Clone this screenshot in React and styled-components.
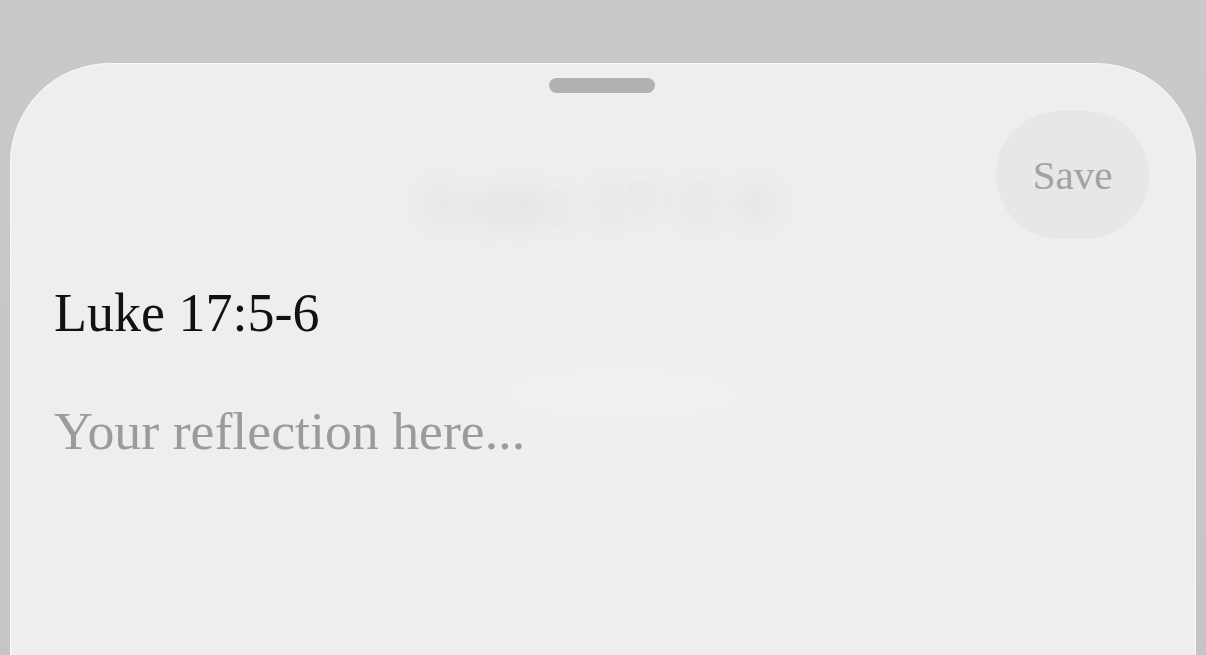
import React from "react";
import styled, { createGlobalStyle } from "styled-components";

const Global = createGlobalStyle`
  html, body { margin: 0; padding: 0; }
  body {
    background: #c7c7c7;
    font-family: "Liberation Serif", "DejaVu Serif", serif;
    overflow: hidden;
  }
`;

const Page = styled.div`
  height: 655px;
  padding: 63px 10px 0;
  box-sizing: border-box;
  background: linear-gradient(180deg, #c9c9c9 0%, #c5c5c5 100%);
`;

const Sheet = styled.div`
  position: relative;
  height: 100%;
  box-sizing: border-box;
  background: #eeeeee;
  border: 1.5px solid #f9f9f9;
  border-bottom: none;
  border-radius: 100px 100px 0 0;
  padding: 0 46px 0 43px;
  display: flex;
  flex-direction: column;
  overflow: hidden;
`;

const Glow = styled.div`
  position: absolute;
  left: 160px;
  top: 230px;
  width: 900px;
  height: 200px;
  border-radius: 50%;
  background: radial-gradient(ellipse at center, rgba(255,255,255,0.12) 0%, rgba(255,255,255,0) 70%);
  pointer-events: none;
`;

const GhostTitle = styled.div`
  position: absolute;
  left: 0;
  right: 0;
  top: 108px;
  text-align: center;
  font-size: 54px;
  font-weight: 700;
  letter-spacing: 6px;
  color: transparent;
  text-shadow: 0 0 40px rgba(0, 0, 0, 0.1), 0 0 24px rgba(0, 0, 0, 0.03);
  pointer-events: none;
  user-select: none;
`;

const Handle = styled.div`
  align-self: center;
  width: 106px;
  height: 15px;
  margin-top: 14px;
  border-radius: 8px;
  background: #b1b1b3;
  position: relative;
`;

const Header = styled.div`
  display: flex;
  justify-content: flex-end;
  margin-top: 18px;
  position: relative;
`;

const SaveButton = styled.button`
  width: 153px;
  height: 128px;
  border: none;
  border-radius: 64px;
  background: #e7e7e7;
  color: #a2a2a2;
  font-family: inherit;
  font-size: 41px;
  padding: 0;
  cursor: pointer;
`;

const Title = styled.h1`
  margin: 42px 0 0;
  font-size: 54px;
  line-height: 64px;
  font-weight: 400;
  color: #111111;
  position: relative;
`;

const Reflection = styled.div`
  margin-top: 54px;
  font-size: 53.8px;
  line-height: 64px;
  color: #9b9b9f;
  position: relative;
`;

export default function App() {
  return (
    <>
      <Global />
      <Page>
        <Sheet>
          <Glow />
          <GhostTitle>Luke 17:5-6</GhostTitle>
          <Handle />
          <Header>
            <SaveButton>Save</SaveButton>
          </Header>
          <Title>Luke 17:5-6</Title>
          <Reflection>Your reflection here...</Reflection>
        </Sheet>
      </Page>
    </>
  );
}
